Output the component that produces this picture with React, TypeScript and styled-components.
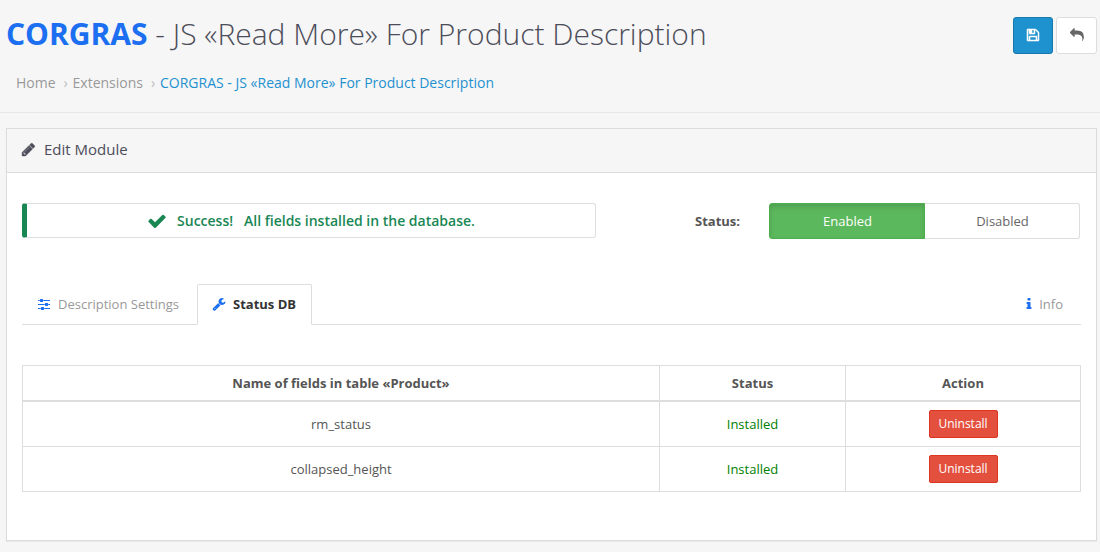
import React from 'react';
import styled, { createGlobalStyle, css } from 'styled-components';

const GlobalStyle = createGlobalStyle`
  * { box-sizing: border-box; }
  body {
    margin: 0;
    background: #f6f6f6;
    color: #555;
    font-family: 'Open Sans', sans-serif;
    font-size: 13px;
    line-height: 20px;
  }
  button { font-family: inherit; }
`;

const ICONS = {
  pencil:
    'M491 1536l91-91-235-235-91 91v107h128v128h107zm523-928q0-22-22-22-10 0-17 7l-542 542q-7 7-7 17 0 22 22 22 10 0 17-7l542-542q7-7 7-17zm-54-192l416 416-832 832h-416v-416zm683 96q0 53-37 90l-166 166-416-416 166-165q36-38 90-38 53 0 91 38l235 234q37 39 37 91z',
  save:
    'M512 1536h768v-384h-768v384zm896 0h128v-896q0-14-10-38.5t-20-34.5l-281-281q-10-10-34-20t-39-10v416q0 40-28 68t-68 28h-576q-40 0-68-28t-28-68v-416h-128v1280h128v-416q0-40 28-68t68-28h832q40 0 68 28t28 68v416zm-384-928v-320q0-13-9.5-22.5t-22.5-9.5h-192q-13 0-22.5 9.5t-9.5 22.5v320q0 13 9.5 22.5t22.5 9.5h192q13 0 22.5-9.5t9.5-22.5zm640 32v928q0 40-28 68t-68 28h-1344q-40 0-68-28t-28-68v-1344q0-40 28-68t68-28h928q40 0 88 20t76 48l280 280q28 28 48 76t20 88z',
  reply:
    'M1792 1120q0 166-127 451-3 7-10.5 24t-13.5 30-13 22q-12 17-28 17-15 0-23.5-10t-8.5-25q0-9 2.5-26.5t2.5-23.5q5-68 5-123 0-112-19.5-200.5t-54-153.5-89-112-116-78-141-47-159.5-24.5-177.5-7h-224v256q0 26-19 45t-45 19-45-19l-512-512q-19-19-19-45t19-45l512-512q19-19 45-19t45 19 19 45v256h224q713 0 875 403 53 134 53 333z',
  check:
    'M1671 566q0 40-28 68l-724 724-136 136q-28 28-68 28t-68-28l-136-136-362-362q-28-28-28-68t28-68l136-136q28-28 68-28t68 28l294 295 656-657q28-28 68-28t68 28l136 136q28 28 28 68z',
  sliders:
    'M480 1408v128h-352v-128h352zm352-128q26 0 45 19t19 45v256q0 26-19 45t-45 19h-256q-26 0-45-19t-19-45v-256q0-26 19-45t45-19h256zm160-384v128h-864v-128h864zm-640-512v128h-224v-128h224zm1312 1024v128h-736v-128h736zm-960-1152q26 0 45 19t19 45v256q0 26-19 45t-45 19h-256q-26 0-45-19t-19-45v-256q0-26 19-45t45-19h256zm640 512q26 0 45 19t19 45v256q0 26-19 45t-45 19h-256q-26 0-45-19t-19-45v-256q0-26 19-45t45-19h256zm320 128v128h-224v-128h224zm0-512v128h-864v-128h864z',
  wrench:
    'M448 1472q0-26-19-45t-45-19-45 19-19 45 19 45 45 19 45-19 19-45zm644-420l-682 682q-37 37-90 37-52 0-91-37l-106-108q-38-36-38-90 0-53 38-91l681-681q39 98 114.5 173.5t173.5 114.5zm634-435q0 39-23 106-47 134-164.5 217.5t-258.5 83.5q-185 0-316.5-131.5t-131.5-316.5 131.5-316.5 316.5-131.5q58 0 121.5 16.5t107.5 46.5q16 11 16 28t-16 28l-293 169v224l193 107q5-3 79-48.5t135.5-81 70.5-35.5q15 0 23.5 10t8.5 25z',
  info:
    'M1216 1344v128q0 26-19 45t-45 19h-512q-26 0-45-19t-19-45v-128q0-26 19-45t45-19h64v-384h-64q-26 0-45-19t-19-45v-128q0-26 19-45t45-19h384q26 0 45 19t19 45v576h64q26 0 45 19t19 45zm-128-1152v192q0 26-19 45t-45 19h-256q-26 0-45-19t-19-45v-192q0-26 19-45t45-19h256q26 0 45 19t19 45z',
};

const Svg = styled.svg<{ $size: number; $weight: number }>`
  display: block;
  flex: none;
  width: ${(p) => p.$size}px;
  height: ${(p) => p.$size}px;
  fill: currentColor;
  stroke: currentColor;
  stroke-width: ${(p) => p.$weight};
`;

const Icon = ({
  name,
  size = 14,
  weight = 0,
}: {
  name: keyof typeof ICONS;
  size?: number;
  weight?: number;
}) => (
  <Svg $size={size} $weight={weight} viewBox="0 0 1792 1792" aria-hidden="true">
    <path d={ICONS[name]} />
  </Svg>
);

const Page = styled.div`
  width: 1100px;
  height: 552px;
  overflow: hidden;
`;

const Header = styled.header`
  display: flex;
  justify-content: space-between;
  align-items: flex-start;
  height: 113px;
  padding: 17px 3px 0 6px;
  border-bottom: 1px solid #e7e7e7;
`;

const Title = styled.h1`
  margin: 0;
  font-size: 30px;
  line-height: 34px;
  font-weight: 300;
  color: #4c4d5a;
  white-space: nowrap;
`;

const Brand = styled.b`
  font-weight: 700;
  color: #1b6ff0;
`;

const Breadcrumb = styled.nav`
  display: flex;
  margin: 22px 0 0 10px;
  font-size: 14px;
  line-height: 20px;
  white-space: nowrap;
`;

const Crumb = styled.a<{ $current?: boolean }>`
  color: ${(p) => (p.$current ? '#1e91cf' : '#999')};
`;

const Separator = styled.span`
  width: 17px;
  padding-left: 8px;
  color: #bbb;
`;

const Actions = styled.div`
  display: flex;
  gap: 3px;
`;

const IconButton = styled.button<{ $primary?: boolean }>`
  display: flex;
  align-items: center;
  justify-content: center;
  width: ${(p) => (p.$primary ? 40 : 41)}px;
  height: 37px;
  padding: 0 0 1px;
  border: 1px solid ${(p) => (p.$primary ? '#1978ab' : '#ddd')};
  border-radius: 3px;
  background: ${(p) => (p.$primary ? '#1e91cf' : '#fff')};
  color: ${(p) => (p.$primary ? '#fff' : '#666')};
`;

const Panel = styled.section`
  height: 413px;
  margin: 15px 3px 0 6px;
  border: 1px solid #dcdcdc;
  background: #fff;
  box-shadow: 0 1px 1px rgba(0, 0, 0, 0.05);
`;

const PanelHeading = styled.h3`
  display: flex;
  align-items: center;
  gap: 8px;
  height: 44px;
  margin: 0;
  padding: 0 0 3px 14px;
  border-bottom: 1px solid #dcdcdc;
  background: #f6f6f6;
  color: #4c4d5a;
  font-size: 15px;
  line-height: 20px;
  font-weight: 400;
`;

const PanelBody = styled.div`
  padding: 30px 15px 0;
`;

const StatusRow = styled.div`
  display: flex;
  align-items: flex-start;
`;

const Notice = styled.div`
  display: flex;
  align-items: center;
  justify-content: center;
  width: 574px;
  height: 35px;
  border: 1px solid #ddd;
  border-left: 5px solid #198754;
  border-radius: 3px;
  color: #198754;
  font-size: 14px;
  font-weight: 600;
  white-space: pre;
`;

const NoticeText = styled.span`
  margin-left: 10px;
`;

const StatusLabel = styled.label`
  width: 144px;
  margin-right: 29px;
  line-height: 36px;
  font-weight: 700;
  text-align: right;
`;

const Toggle = styled.div`
  display: flex;
  width: 311px;
  height: 36px;
`;

const ToggleOption = styled.button<{ $active?: boolean }>`
  padding: 0 0 0 1px;
  border: 1px solid #ddd;
  font-size: 13px;
  line-height: 20px;
  ${(p) =>
    p.$active
      ? css`
          width: 156px;
          border-color: #4cae4c;
          border-radius: 3px 0 0 3px;
          background: #5cb85c;
          color: #fff;
          box-shadow: inset 0 3px 5px rgba(0, 0, 0, 0.125);
        `
      : css`
          width: 155px;
          border-left: 0;
          border-radius: 0 3px 3px 0;
          background: #fff;
          color: #666;
        `}
`;

const Tabs = styled.div`
  display: flex;
  height: 41px;
  margin-top: 45px;
  border-bottom: 1px solid #ddd;
`;

const Tab = styled.a<{ $active?: boolean; $end?: boolean }>`
  display: flex;
  align-items: center;
  gap: 7px;
  height: 41px;
  padding: 0 15px 1px 14px;
  border: 1px solid transparent;
  color: #999;
  white-space: nowrap;
  svg { color: #1b6ff0; }
  ${(p) =>
    p.$active &&
    css`
      margin-left: 2px;
      border-color: #ddd #ddd #fff;
      border-radius: 2px 2px 0 0;
      background: #fff;
      color: #333;
      font-weight: 700;
    `}
  ${(p) =>
    p.$end &&
    css`
      gap: 3px;
      margin-left: auto;
      padding-right: 17px;
    `}
`;

const Table = styled.table`
  width: 1059px;
  margin-top: 40px;
  border-collapse: collapse;
  table-layout: fixed;
  text-align: center;
`;

const Column = styled.col<{ $width: number }>`
  width: ${(p) => p.$width}px;
`;

const HeadCell = styled.th`
  height: 35px;
  padding: 1px 0 0;
  border: 1px solid #ddd;
  border-bottom-width: 2px;
  font-weight: 700;
`;

const BodyRow = styled.tr`
  height: 45px;
  &:first-child {
    height: 46px;
  }
`;

const Cell = styled.td<{ $good?: boolean }>`
  padding: 0;
  border: 1px solid #ddd;
  color: ${(p) => (p.$good ? 'green' : '#555')};
`;

const DangerButton = styled.button`
  display: block;
  width: 69px;
  height: 28px;
  margin: 0 auto;
  padding: 0;
  border: 1px solid #dc3522;
  border-radius: 2px;
  background: #e4503e;
  color: #fff;
  font-size: 12px;
  line-height: 18px;
`;

const FIELDS = ['rm_status', 'collapsed_height'];

export default function App() {
  return (
    <Page>
      <GlobalStyle />
      <Header>
        <div>
          <Title>
            <Brand>CORGRAS</Brand> - JS «Read More» For Product Description
          </Title>
          <Breadcrumb>
            <Crumb>Home</Crumb>
            <Separator>›</Separator>
            <Crumb>Extensions</Crumb>
            <Separator>›</Separator>
            <Crumb $current>CORGRAS - JS «Read More» For Product Description</Crumb>
          </Breadcrumb>
        </div>
        <Actions>
          <IconButton $primary aria-label="Save">
            <Icon name="save" weight={70} />
          </IconButton>
          <IconButton aria-label="Back">
            <Icon name="reply" />
          </IconButton>
        </Actions>
      </Header>
      <Panel>
        <PanelHeading>
          <Icon name="pencil" size={15} weight={50} />
          Edit Module
        </PanelHeading>
        <PanelBody>
          <StatusRow>
            <Notice>
              <Icon name="check" size={20} />
              <NoticeText>{'Success!\u00a0\u00a0 All fields installed in the database.'}</NoticeText>
            </Notice>
            <StatusLabel>Status:</StatusLabel>
            <Toggle>
              <ToggleOption $active>Enabled</ToggleOption>
              <ToggleOption>Disabled</ToggleOption>
            </Toggle>
          </StatusRow>
          <Tabs>
            <Tab>
              <Icon name="sliders" />
              Description Settings
            </Tab>
            <Tab $active>
              <Icon name="wrench" />
              Status DB
            </Tab>
            <Tab $end>
              <Icon name="info" />
              Info
            </Tab>
          </Tabs>
          <Table>
            <colgroup>
              <Column $width={637} />
              <Column $width={186} />
              <Column $width={235} />
            </colgroup>
            <thead>
              <tr>
                <HeadCell>Name of fields in table «Product»</HeadCell>
                <HeadCell>Status</HeadCell>
                <HeadCell>Action</HeadCell>
              </tr>
            </thead>
            <tbody>
              {FIELDS.map((field) => (
                <BodyRow key={field}>
                  <Cell>{field}</Cell>
                  <Cell $good>Installed</Cell>
                  <Cell>
                    <DangerButton>Uninstall</DangerButton>
                  </Cell>
                </BodyRow>
              ))}
            </tbody>
          </Table>
        </PanelBody>
      </Panel>
    </Page>
  );
}
